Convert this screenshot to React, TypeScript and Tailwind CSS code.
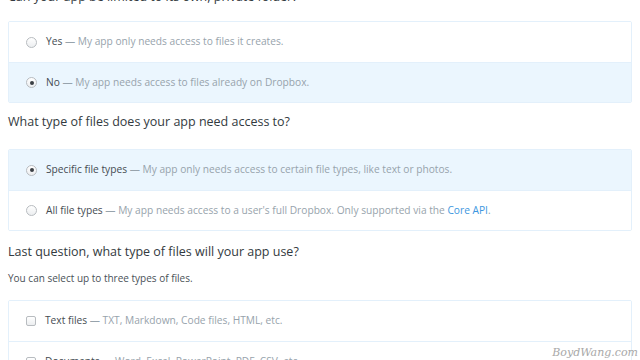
import React, { useState } from "react";

type Option = {
  id: string;
  label: string;
  desc: React.ReactNode;
};

const accessOptions: Option[] = [
  { id: "yes", label: "Yes", desc: "My app only needs access to files it creates." },
  { id: "no", label: "No", desc: "My app needs access to files already on Dropbox." },
];

const typeOptions: Option[] = [
  {
    id: "specific",
    label: "Specific file types",
    desc: "My app only needs access to certain file types, like text or photos.",
  },
  {
    id: "all",
    label: "All file types",
    desc: (
      <>
        My app needs access to a user's full Dropbox. Only supported via the{" "}
        <a className="text-[#3d97e0]" href="#">
          Core API
        </a>
        .
      </>
    ),
  },
];

const fileOptions: Option[] = [
  { id: "text", label: "Text files", desc: "TXT, Markdown, Code files, HTML, etc." },
  { id: "docs", label: "Documents", desc: "Word, Excel, PowerPoint, PDF, CSV, etc." },
];

function Radio({ checked }: { checked: boolean }) {
  return (
    <span className="w-[11px] h-[11px] rounded-full border border-[#b8bcc0] bg-gradient-to-b from-white to-[#eceef0] flex items-center justify-center shrink-0">
      {checked && <span className="w-[4px] h-[4px] rounded-full bg-[#3a3f44]" />}
    </span>
  );
}

function Checkbox({ checked }: { checked: boolean }) {
  return (
    <span className="w-[10px] h-[10px] rounded-[2px] border border-[#b8bcc0] bg-gradient-to-b from-white to-[#eceef0] shrink-0 flex items-center justify-center">
      {checked && <span className="text-[8px] leading-none text-[#3a3f44]">✓</span>}
    </span>
  );
}

function Row({
  option,
  selected,
  control,
  onClick,
}: {
  option: Option;
  selected: boolean;
  control: React.ReactNode;
  onClick: () => void;
}) {
  return (
    <div
      onClick={onClick}
      className={`h-[40px] flex items-center pl-[17px] gap-[9px] border-t border-[#e3f0fb] first:border-t-0 ${
        selected ? "bg-[#ebf6fe]" : "bg-white"
      }`}
    >
      {control}
      <p className="text-[10.2px] text-[#97a3ac] whitespace-nowrap">
        <span className="text-[#454c52]">{option.label}</span> — {option.desc}
      </p>
    </div>
  );
}

export default function App() {
  const [access, setAccess] = useState("no");
  const [fileType, setFileType] = useState("specific");
  const [files, setFiles] = useState<string[]>([]);

  const toggleFile = (id: string) => {
    setFiles((prev) =>
      prev.includes(id) ? prev.filter((f) => f !== id) : [...prev, id].slice(0, 3)
    );
  };

  return (
    <div
      className="relative w-[640px] h-[360px] overflow-hidden bg-white"
      style={{ fontFamily: '"Open Sans", sans-serif' }}
    >
      <div className="-mt-[12px] pl-[8px] w-[632px]">
        <h2 className="text-[12.5px] leading-[18px] text-[#333a40]">
          Can your app be limited to its own, private folder?
        </h2>
        <div className="mt-[15px] border border-[#e3f0fb] rounded-[2px] overflow-hidden">
          {accessOptions.map((o) => (
            <Row
              key={o.id}
              option={o}
              selected={access === o.id}
              control={<Radio checked={access === o.id} />}
              onClick={() => setAccess(o.id)}
            />
          ))}
        </div>

        <h2 className="mt-[10px] text-[12.5px] leading-[18px] text-[#333a40]">
          What type of files does your app need access to?
        </h2>
        <div className="mt-[18px] border border-[#e3f0fb] rounded-[2px] overflow-hidden">
          {typeOptions.map((o) => (
            <Row
              key={o.id}
              option={o}
              selected={fileType === o.id}
              control={<Radio checked={fileType === o.id} />}
              onClick={() => setFileType(o.id)}
            />
          ))}
        </div>

        <h2 className="mt-[12px] text-[12.5px] leading-[18px] text-[#333a40]">
          Last question, what type of files will your app use?
        </h2>
        <p className="mt-[9px] text-[10px] leading-[16px] text-[#4a5157]">
          You can select up to three types of files.
        </p>
        <div className="mt-[14px] border border-[#e3f0fb] rounded-[2px] overflow-hidden">
          {fileOptions.map((o) => (
            <Row
              key={o.id}
              option={o}
              selected={false}
              control={<Checkbox checked={files.includes(o.id)} />}
              onClick={() => toggleFile(o.id)}
            />
          ))}
        </div>
      </div>

      <span
        className="absolute right-[2px] bottom-[-1px] text-[11px] italic text-[#a8a8a8]"
        style={{ fontFamily: '"DejaVu Serif", serif' }}
      >
        BoydWang.com
      </span>
    </div>
  );
}
